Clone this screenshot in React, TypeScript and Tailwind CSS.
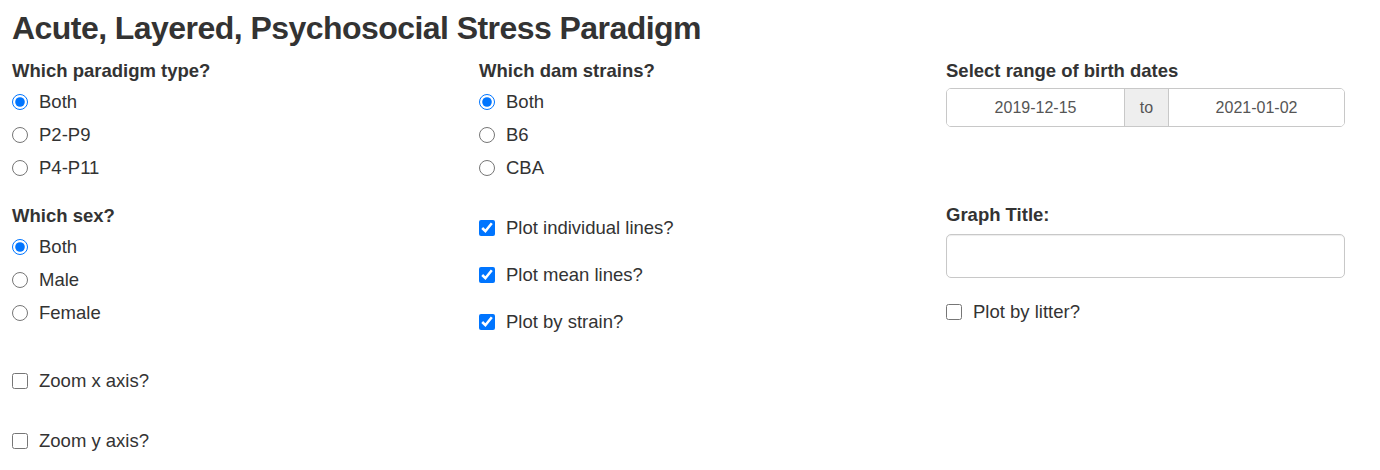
import React from 'react';

const font = { fontFamily: '"Liberation Sans", Arial, sans-serif' };

const Label: React.FC<{ text: string; className?: string }> = ({ text, className = '' }) => (
  <div className={`h-[29px] flex items-center text-[18.5px] font-bold text-[#333] ${className}`}>{text}</div>
);

const Radio: React.FC<{ name: string; label: string; checked?: boolean }> = ({ name, label, checked }) => (
  <label className="h-[33px] flex items-center gap-[11px] text-[18.5px] text-[#333]">
    <input type="radio" name={name} defaultChecked={checked} className="w-4 h-4 m-0" />
    <span>{label}</span>
  </label>
);

const Check: React.FC<{ label: string; checked?: boolean; className?: string }> = ({ label, checked, className = '' }) => (
  <label className={`h-[33px] flex items-center gap-[11px] text-[18.5px] text-[#333] ${className}`}>
    <input type="checkbox" defaultChecked={checked} className="w-4 h-4 m-0" />
    <span>{label}</span>
  </label>
);

const App: React.FC = () => {
  return (
    <div className="w-[1380px] h-[470px] bg-white px-[12px] overflow-hidden" style={font}>
      {/* Title */}
      <h1 className="pt-[11px] text-[32px] leading-[35px] font-bold tracking-[-0.55px] text-[#333]">
        Acute, Layered, Psychosocial Stress Paradigm
      </h1>

      <div className="mt-[10px] flex">
        {/* Left column */}
        <div className="w-[467px] flex flex-col">
          <Label text="Which paradigm type?" />
          <Radio name="paradigm" label="Both" checked />
          <Radio name="paradigm" label="P2-P9" />
          <Radio name="paradigm" label="P4-P11" />

          <Label text="Which sex?" className="mt-[17px]" />
          <Radio name="sex" label="Both" checked />
          <Radio name="sex" label="Male" />
          <Radio name="sex" label="Female" />

          <Check label="Zoom x axis?" className="mt-[35px]" />
          <Check label="Zoom y axis?" className="mt-[27px]" />
        </div>

        {/* Middle column */}
        <div className="w-[467px] flex flex-col">
          <Label text="Which dam strains?" />
          <Radio name="dam" label="Both" checked />
          <Radio name="dam" label="B6" />
          <Radio name="dam" label="CBA" />

          <Check label="Plot individual lines?" checked className="mt-[27px]" />
          <Check label="Plot mean lines?" checked className="mt-[14px]" />
          <Check label="Plot by strain?" checked className="mt-[14px]" />
        </div>

        {/* Right column */}
        <div className="w-[399px] flex flex-col">
          <Label text="Select range of birth dates" />
          <div className="mt-[3px] h-[39px] flex border border-[#c8c8c8] rounded-[5px] overflow-hidden text-[16px] text-[#555]">
            <div className="w-[177px] flex items-center justify-center bg-white">2019-12-15</div>
            <div className="w-[45px] flex items-center justify-center bg-[#eee] border-x border-[#c8c8c8]">to</div>
            <div className="flex-1 flex items-center justify-center bg-white">2021-01-02</div>
          </div>

          <Label text="Graph Title:" className="mt-[73px]" />
          <input
            type="text"
            className="mt-[5px] h-[44px] w-full border border-[#c8c8c8] rounded-[5px] px-3 shadow-[inset_0_1px_1px_rgba(0,0,0,0.075)] outline-none"
          />

          <Check label="Plot by litter?" className="mt-[17px]" />
        </div>
      </div>
    </div>
  );
};

export default App;
